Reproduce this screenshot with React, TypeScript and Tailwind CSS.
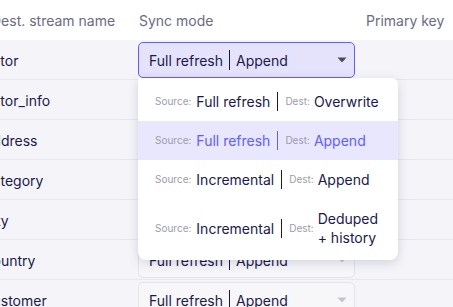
const streams = ['actor', 'actor_info', 'address', 'category', 'city', 'country', 'customer'];

interface SyncOption {
  source: string;
  dest: string;
}

const options: SyncOption[] = [
  { source: 'Full refresh', dest: 'Overwrite' },
  { source: 'Full refresh', dest: 'Append' },
  { source: 'Incremental', dest: 'Append' },
  { source: 'Incremental', dest: 'Deduped + history' },
];

function Caret({ active }: { active: boolean }) {
  return (
    <svg width="10" height="6" viewBox="0 0 10 6" className={active ? 'text-[#4b4b5e]' : 'text-[#c3c3cd]'}>
      <path d="M0.5 0.5h9L5 5.5z" fill="currentColor" />
    </svg>
  );
}

function SyncSelect({ active }: { active: boolean }) {
  return (
    <div
      className={
        active
          ? 'flex h-[36px] w-[217px] items-center justify-between rounded-[5px] border border-[#615eff] bg-[#e5e3fb] pl-[10px] pr-[7px] text-[#1a194d]'
          : 'flex h-[36px] w-[217px] items-center justify-between rounded-[5px] border border-[#e3e3ea] bg-[#f7f7fa] pl-[10px] pr-[7px] text-[#1a194d]'
      }
    >
      <span className="flex items-center">
        Full refresh
        <span className="mx-[6px] h-[20px] w-px bg-current" />
        Append
      </span>
      <Caret active={active} />
    </div>
  );
}

function Dropdown() {
  return (
    <div className="absolute left-0 top-[36px] z-10 w-[260px] rounded-b-[8px] rounded-tr-[6px] bg-white pt-[4px] pb-[3px] shadow-[0_3px_12px_rgba(26,25,77,0.16)]">
      {options.map((o, i) => {
        const selected = i === 1;
        return (
          <div
            key={i}
            className={
              'flex items-center py-[10px] pl-[17px] pr-[16px] leading-[19px] ' +
              (selected ? 'bg-[#e8e7fd] text-[#615eff]' : 'text-[#1a194d]')
            }
          >
            <span className="mr-[5px] text-[10px] text-[#9c9cad]">Source:</span>
            <span className="whitespace-nowrap">{o.source}</span>
            <span className="mx-[7px] h-[19px] w-px shrink-0 bg-current" />
            <span className="mr-[4px] text-[10px] text-[#9c9cad]">Dest:</span>
            <span className="min-w-0 flex-1">{o.dest}</span>
          </div>
        );
      })}
    </div>
  );
}

export default function App() {
  return (
    <div
      className="h-[307px] w-[453px] overflow-hidden bg-[#f5f5f9] text-[14px]"
      style={{ fontFamily: 'Inter, "Noto Sans", sans-serif' }}
    >
      {/* Header */}
      <div className="flex h-[40px] items-center bg-white text-[#6b6b7f]">
        <div className="ml-[-9px] w-[148px]">Dest. stream name</div>
        <div className="w-[227px]">Sync mode</div>
        <div>Primary key</div>
      </div>

      {/* Rows */}
      {streams.map((name, i) => (
        <div key={name} className="flex h-[40px] items-start border-b border-[#e8e8ee] pt-[2px]">
          <div className="ml-[-15.5px] flex h-[36px] w-[153.5px] items-center text-[#1a194d]">{name}</div>
          <div className="relative">
            <SyncSelect active={i === 0} />
            {i === 0 && <Dropdown />}
          </div>
        </div>
      ))}
    </div>
  );
}
